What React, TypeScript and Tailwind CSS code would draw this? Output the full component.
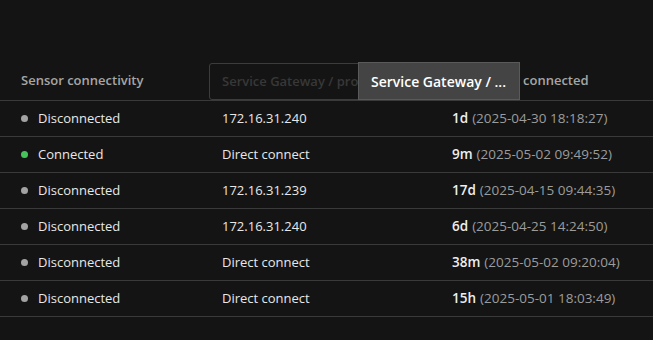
import { useState } from "react";

type Row = {
  connected: boolean;
  gateway: string;
  ago: string;
  at: string;
};

const ROWS: Row[] = [
  { connected: false, gateway: "172.16.31.240", ago: "1d", at: "2025-04-30 18:18:27" },
  { connected: true, gateway: "Direct connect", ago: "9m", at: "2025-05-02 09:49:52" },
  { connected: false, gateway: "172.16.31.239", ago: "17d", at: "2025-04-15 09:44:35" },
  { connected: false, gateway: "172.16.31.240", ago: "6d", at: "2025-04-25 14:24:50" },
  { connected: false, gateway: "Direct connect", ago: "38m", at: "2025-05-02 09:20:04" },
  { connected: false, gateway: "Direct connect", ago: "15h", at: "2025-05-01 18:03:49" },
];

export default function App() {
  const [dragging] = useState(true);

  return (
    <div
      className="h-[340px] w-full overflow-hidden bg-[#141414] pt-[62px] text-[#e8e8e8]"
      style={{ fontFamily: '"Segoe UI", "Open Sans", sans-serif' }}
    >
      {/* header */}
      <div className="relative flex h-[39px] border-b border-[#3a3a3a] text-[13px] font-semibold text-[#a6a6a6]">
        <div className="flex w-[209px] items-center pl-[21px]">Sensor connectivity</div>
        <div className="flex w-[230px] items-end">
          {dragging && (
            <div className="flex h-[37px] w-full items-center rounded-[3px] border border-[#3c3c3c] pl-[12px] text-[#383838]">
              Service Gateway / proxy
            </div>
          )}
        </div>
        {/* start of the label sits under the tooltip */}
        <div className="flex flex-1 items-center pl-[84px]">connected</div>

        {/* tooltip */}
        <div className="absolute left-[358px] top-0 flex h-[38px] w-[162px] items-center border border-[#5a5a5a] bg-[#444444] pl-[12px] text-[14px] text-white">
          Service Gateway / ...
        </div>
      </div>

      {/* rows */}
      {ROWS.map((row, i) => (
        <div key={i} className="flex h-[36px] border-b border-[#3a3a3a] text-[13px]">
          <div className="flex w-[209px] items-center pl-[21px]">
            <span
              className={
                row.connected
                  ? "mr-[10px] h-[7px] w-[7px] rounded-full bg-[#47c35b]"
                  : "mr-[10px] h-[7px] w-[7px] rounded-full bg-[#a3a3a3]"
              }
            />
            {row.connected ? "Connected" : "Disconnected"}
          </div>
          <div className="flex w-[230px] items-center pl-[13px]">{row.gateway}</div>
          <div className="flex flex-1 items-center pl-[13px]">
            <span className="text-[13.5px] font-semibold text-[#eeeeee]">{row.ago}</span>
            <span className="ml-[4px] text-[13.5px] text-[#9c9c9c]">({row.at})</span>
          </div>
        </div>
      ))}
    </div>
  );
}
